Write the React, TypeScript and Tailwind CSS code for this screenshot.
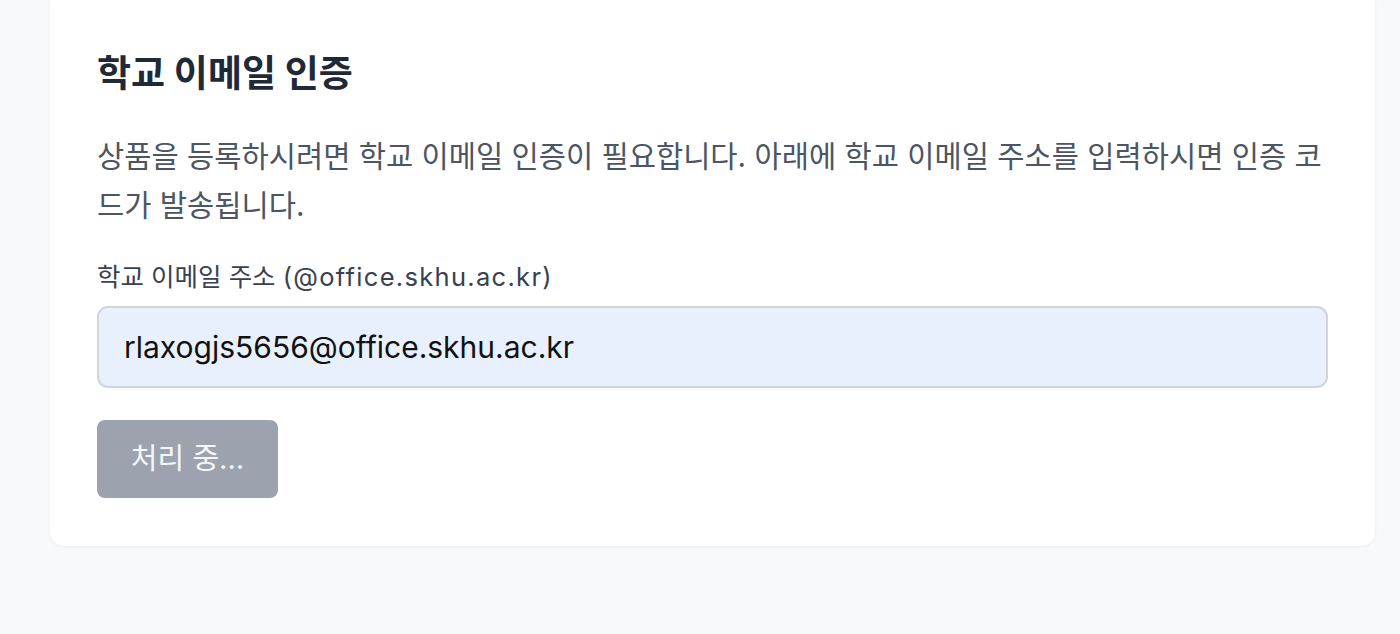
import React, { useState } from "react";

function EmailVerify() {
  const [email, setEmail] = useState("rlaxogjs5656@office.skhu.ac.kr");

  return (
    <div
      className="min-h-screen bg-[#f8f9fb] pl-[50px] pr-[25px] pb-[88px]"
      style={{ fontFamily: "Inter, 'Noto Sans CJK KR', sans-serif" }}
    >
      <div className="-mt-[12px] rounded-[14px] bg-white px-[47px] pt-[64px] pb-[48px] shadow-[0_1px_3px_rgba(0,0,0,0.06)]">
        {/* 제목 */}
        <h1 className="text-[37px] font-bold leading-[44px] text-[#1f2937]">
          학교 이메일 인증
        </h1>

        <p className="mt-[36px] text-[29.6px] leading-[49px] text-[#4b5563]">
          상품을 등록하시려면 학교 이메일 인증이 필요합니다. 아래에 학교 이메일 주소를 입력하시면 인증 코드가 발송됩니다.
        </p>

        <label className="mt-[31px] block text-[25.5px] leading-[32px] text-[#374151]">
          학교 이메일 주소 <span className="tracking-[1.3px]">(@office.skhu.ac.kr)</span>
        </label>

        <input
          type="email"
          value={email}
          onChange={(e) => setEmail(e.target.value)}
          className="mt-[13px] block h-[82px] w-full rounded-[11px] border-2 border-[#d1d5db] bg-[#e8f0fe] px-[25px] text-[30px] text-[#111111] outline-none"
        />

        <button
          disabled
          className="mt-[32px] h-[78px] w-[181px] rounded-[8px] bg-[#9ca3af] text-[29px] text-white/90"
        >
          처리 중...
        </button>
      </div>
    </div>
  );
}

export default function App() {
  return <EmailVerify />;
}
